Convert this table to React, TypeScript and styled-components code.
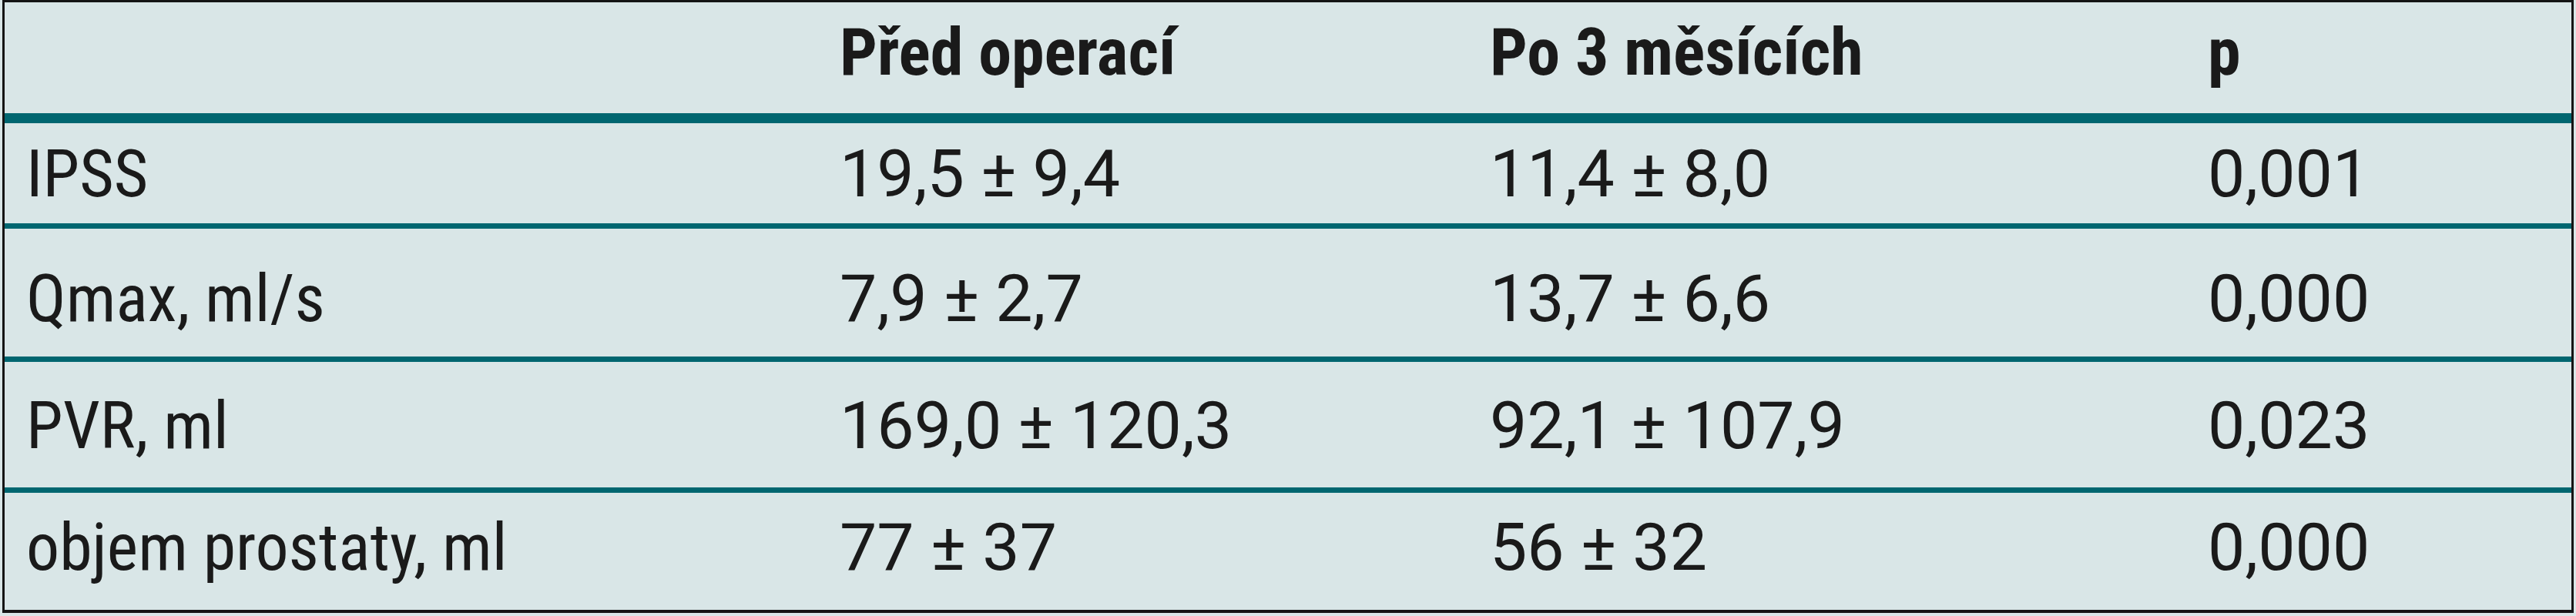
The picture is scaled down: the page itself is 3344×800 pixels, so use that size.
import React from "react";
import styled, { createGlobalStyle } from "styled-components";

const GlobalStyle = createGlobalStyle`
  html, body {
    margin: 0;
    padding: 0;
    background: #d9e6e7;
  }
`;

const Page = styled.div`
  padding: 0 3px 4px 3px;
`;

const Table = styled.div`
  border: 3px solid #141414;
  border-bottom-width: 4px;
  background: #d9e6e7;
  color: #1a1a1a;
`;

const Row = styled.div<{ $h: number; $pad: number; $line: number }>`
  display: grid;
  grid-template-columns: 1056px 844px 932px 1fr;
  box-sizing: border-box;
  height: ${(p) => p.$h}px;
  padding-top: ${(p) => p.$pad}px;
  border-bottom: ${(p) => p.$line}px solid #006670;
`;

const Cell = styled.div<{ $label?: boolean; $head?: boolean }>`
  padding-left: 28px;
  font-family: ${(p) =>
    p.$label || p.$head ? '"Roboto Condensed", Roboto' : "Roboto"}, "Liberation Sans", sans-serif;
  font-weight: ${(p) => (p.$head ? 700 : 400)};
  font-size: 86px;
  line-height: 100px;
  white-space: nowrap;
`;

type Data = { label: string; before: string; after: string; p: string; h: number; pad: number; line: number };

const rows: Data[] = [
  { label: "IPSS", before: "19,5 ± 9,4", after: "11,4 ± 8,0", p: "0,001", h: 137, pad: 16, line: 7 },
  { label: "Qmax, ml/s", before: "7,9 ± 2,7", after: "13,7 ± 6,6", p: "0,000", h: 173, pad: 41, line: 7 },
  { label: "PVR, ml", before: "169,0 ± 120,3", after: "92,1 ± 107,9", p: "0,023", h: 170, pad: 33, line: 7 },
  { label: "objem prostaty, ml", before: "77 ± 37", after: "56 ± 32", p: "0,000", h: 152, pad: 21, line: 0 },
];

export default function App() {
  return (
    <>
      <GlobalStyle />
      <Page>
        <Table>
          <Row $h={157} $pad={15} $line={13}>
            <Cell $head />
            <Cell $head>Před operací</Cell>
            <Cell $head>Po 3 měsících</Cell>
            <Cell $head>p</Cell>
          </Row>
          {rows.map((r) => (
            <Row key={r.label} $h={r.h} $pad={r.pad} $line={r.line}>
              <Cell $label>{r.label}</Cell>
              <Cell>{r.before}</Cell>
              <Cell>{r.after}</Cell>
              <Cell>{r.p}</Cell>
            </Row>
          ))}
        </Table>
      </Page>
    </>
  );
}
